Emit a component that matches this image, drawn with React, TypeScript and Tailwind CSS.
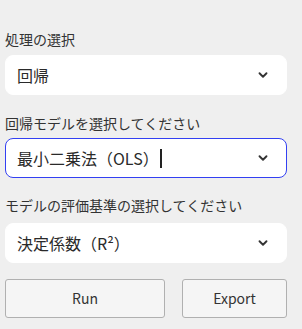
import { ChevronDown } from "lucide-react";

const font = { fontFamily: '"Noto Sans CJK JP", "Noto Sans", sans-serif' };

interface SelectBoxProps {
  value: string;
  focused?: boolean;
}

const SelectBox: React.FC<SelectBoxProps> = ({ value, focused }) => {
  return (
    <div
      className={
        focused
          ? "flex items-center h-[40px] rounded-[8px] bg-white border border-[#3340f2] pl-[11px] pr-[16px]"
          : "flex items-center h-[40px] rounded-[8px] bg-white border border-white pl-[11px] pr-[16px]"
      }
    >
      <span className="text-[16px] text-[#2a2a2a] leading-none">{value}</span>
      {focused && <span className="ml-px w-[2px] h-[19px] bg-[#222]" />}
      <ChevronDown className="ml-auto text-[#333]" size={14} strokeWidth={3.2} />
    </div>
  );
};

export default function App() {
  return (
    <div className="w-[302px] h-[329px] bg-[#efefef] pl-[5px] pr-[15px] pt-[29px]" style={font}>
      <div className="text-[14px] leading-[20px] text-[#333] mb-[6px]">処理の選択</div>
      <SelectBox value="回帰" />
      <div className="text-[14px] leading-[20px] text-[#333] mt-[18px] mb-[5px]">
        回帰モデルを選択してください
      </div>
      <SelectBox value="最小二乗法（OLS）" focused />
      <div className="text-[14px] leading-[20px] text-[#333] mt-[17px] mb-[8px]">
        モデルの評価基準の選択してください
      </div>
      <SelectBox value="決定係数（R²）" />
      <div className="flex gap-[17px] mt-[16px]">
        <button className="w-[160px] h-[39px] bg-[#f5f5f5] border border-[#b0b0b0] rounded-[3px] text-[14px] text-[#333]">
          Run
        </button>
        <button className="flex-1 h-[39px] bg-[#f5f5f5] border border-[#b0b0b0] rounded-[3px] text-[14px] text-[#333]">
          Export
        </button>
      </div>
    </div>
  );
}
